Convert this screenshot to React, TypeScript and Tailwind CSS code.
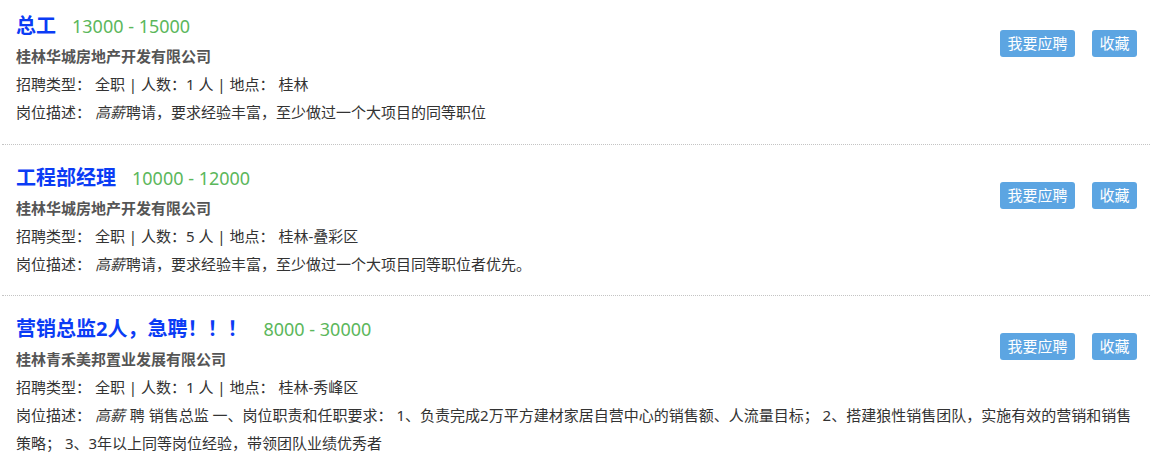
import React from "react";

interface Job {
  title: string;
  salary: string;
  company: string;
  count: number;
  place: string;
  desc: React.ReactNode;
}

const jobs: Job[] = [
  {
    title: "总工",
    salary: "13000 - 15000",
    company: "桂林华城房地产开发有限公司",
    count: 1,
    place: "桂林",
    desc: (
      <>
        <i className="pr-[1px]">高薪</i>聘请，要求经验丰富，至少做过一个大项目的同等职位
      </>
    ),
  },
  {
    title: "工程部经理",
    salary: "10000 - 12000",
    company: "桂林华城房地产开发有限公司",
    count: 5,
    place: "桂林-叠彩区",
    desc: (
      <>
        <i className="pr-[1px]">高薪</i>聘请，要求经验丰富，至少做过一个大项目同等职位者优先。
      </>
    ),
  },
  {
    title: "营销总监2人，急聘！！！",
    salary: "8000 - 30000",
    company: "桂林青禾美邦置业发展有限公司",
    count: 1,
    place: "桂林-秀峰区",
    desc: (
      <>
        <i className="pr-[1px]">高薪</i> 聘 销售总监 一、岗位职责和任职要求： 1、负责完成2万平方建材家居自营中心的销售额、人流量目标；
        2、搭建狼性销售团队，实施有效的营销和销售策略； 3、3年以上同等岗位经验，带领团队业绩优秀者
      </>
    ),
  },
];

const JobItem = ({ job, first }: { job: Job; first: boolean }) => {
  return (
    <div
      className={`${first ? "pt-[12px] pb-[18px]" : "pt-[19px] pb-[17px]"} pl-[14px] pr-[13px] border-b border-dotted border-[#c4c4c4]`}
    >
      <div className="float-right mt-[18px] flex gap-[17px]">
        <button className="w-[75px] h-[27px] flex items-center justify-center rounded-[3px] bg-[#5ca5e2] text-white text-[15px]">
          我要应聘
        </button>
        <button className="w-[45px] h-[27px] flex items-center justify-center rounded-[3px] bg-[#5ca5e2] text-white text-[15px]">
          收藏
        </button>
      </div>
      <div className="h-[28px] flex items-center">
        <span className="text-[20px] font-bold text-[#0b3cf5]">{job.title}</span>
        <span className="ml-[16px] text-[18px] text-[#5bb75b]">{job.salary}</span>
      </div>
      <p className="mt-[2px] leading-[28px] text-[15px] font-bold text-[#555]">
        {job.company}
      </p>
      <p className="leading-[28px] text-[15px] text-[#333]">
        招聘类型： 全职 | 人数：{job.count} 人 | 地点： {job.place}
      </p>
      <p className="leading-[28px] text-[15px] text-[#333]">
        岗位描述： {job.desc}
      </p>
    </div>
  );
};

export default function App() {
  return (
    <div
      className="w-[1152px] h-[465px] bg-white overflow-hidden"
      style={{ fontFamily: '"Noto Sans", "Noto Sans CJK SC", sans-serif' }}
    >
      <div className="mx-[2px]">
        {jobs.map((job, i) => (
          <JobItem key={job.title} job={job} first={i === 0} />
        ))}
      </div>
    </div>
  );
}
